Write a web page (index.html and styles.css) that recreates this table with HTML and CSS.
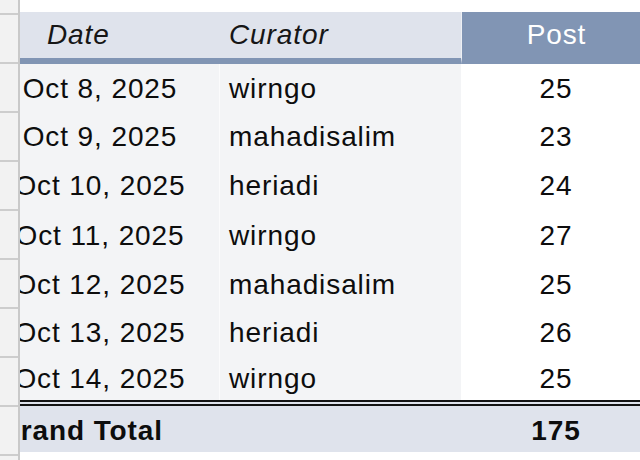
FILE: index.html
```html
<!DOCTYPE html>
<html>
<head>
<meta charset="utf-8">
<link rel="stylesheet" href="styles.css">
</head>
<body>
<div class="sheet">
  <div class="gutter"></div>
  <div class="viewport">
    <div class="table">
      <div class="c head date-h">Date</div>
      <div class="c head cur-h">Curator</div>
      <div class="c head post-h">Post</div>

      <div class="c date">Oct 8, 2025</div>
      <div class="c cur">wirngo</div>
      <div class="c post">25</div>

      <div class="c date">Oct 9, 2025</div>
      <div class="c cur">mahadisalim</div>
      <div class="c post">23</div>

      <div class="c date">Oct 10, 2025</div>
      <div class="c cur">heriadi</div>
      <div class="c post">24</div>

      <div class="c date">Oct 11, 2025</div>
      <div class="c cur">wirngo</div>
      <div class="c post">27</div>

      <div class="c date">Oct 12, 2025</div>
      <div class="c cur">mahadisalim</div>
      <div class="c post">25</div>

      <div class="c date">Oct 13, 2025</div>
      <div class="c cur">heriadi</div>
      <div class="c post">26</div>

      <div class="c date">Oct 14, 2025</div>
      <div class="c cur">wirngo</div>
      <div class="c post">25</div>

      <div class="c total total-label">Grand Total</div>
      <div class="c total"></div>
      <div class="c total total-num">175</div>
    </div>
  </div>
</div>
</body>
</html>
```
FILE: styles.css
```css
html, body {
  margin: 0;
  padding: 0;
  background: #ffffff;
  overflow: hidden;
}
.sheet {
  display: flex;
  width: 640px;
  height: 460px;
  overflow: hidden;
  font-family: "Liberation Sans", Arial, sans-serif;
  font-size: 28px;
  letter-spacing: 0.9px;
  color: #0d0d0d;
}
.gutter {
  width: 18px;
  flex: none;
  border-right: 2px solid #c9c9c9;
  background-color: #f2f2f2;
  background-image: repeating-linear-gradient(to bottom,
    transparent 0, transparent 13px,
    #cdcdcd 13px, #cdcdcd 15px,
    transparent 15px, transparent 49px);
}
.viewport {
  flex: 1;
  overflow: hidden;
  padding-top: 12px;
}
.table {
  display: grid;
  grid-template-columns: 238px 242px 200px;
  grid-template-rows: 52px 49px 48px 50px 50px 48px 48px 43px 52px;
  margin-left: -39px;
  width: 680px;
}
.c {
  display: flex;
  align-items: center;
  white-space: nowrap;
  box-sizing: border-box;
}
.head {
  background: #dfe3ec;
  border-bottom: 6px solid #8195b4;
  font-style: italic;
  color: #161616;
}
.date-h { padding-left: 66px; }
.cur-h { padding-left: 10px; }
.post-h {
  background: #8195b4;
  color: #ffffff;
  font-style: normal;
  justify-content: center;
  padding-right: 10px;
  border-left: 1px solid #eef0f4;
}
.date {
  background: #f3f4f6;
  justify-content: center;
}
.cur {
  background: #f3f4f6;
  border-left: 1px solid #fbfbfc;
  padding-left: 9px;
}
.post {
  background: #ffffff;
  justify-content: center;
  padding-right: 10px;
}
.total {
  background: #dfe3ec;
  border-top: 6px double #141414;
  padding-top: 4px;
  font-weight: bold;
}
.total-label { padding-left: 17px; }
.total-num {
  justify-content: center;
  padding-right: 10px;
}
```
